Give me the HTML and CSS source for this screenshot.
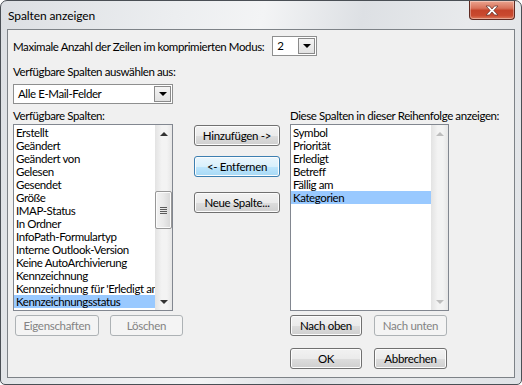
FILE: index.html
```html
<!DOCTYPE html>
<html lang="de">
<head>
    <meta charset="UTF-8">
    <title>Spalten anzeigen</title>
    <link rel="stylesheet" href="styles.css">
</head>
<body>
    <div class="window">
        <div class="titlebar">
            <span class="title">Spalten anzeigen</span>
            <div class="close-btn">
                <svg width="16" height="11" viewBox="0 0 16 11">
                    <path d="M2 1h3.5L8 4l2.5-3H14l-4.2 4.5L14 10h-3.5L8 7l-2.5 3H2l4.2-4.5z" fill="#fff" stroke="#6a3a32" stroke-width="0.8"/>
                </svg>
            </div>
        </div>

        <div class="client">
            <div class="row-max">
                <span>Maximale Anzahl der Zeilen im komprimierten Modus:</span>
                <div class="combo combo-small">
                    <span class="combo-text">2</span>
                    <span class="combo-btn"><i class="tri-down"></i></span>
                </div>
            </div>

            <div class="label-from">Verfügbare Spalten auswählen aus:</div>
            <div class="combo combo-wide">
                <span class="combo-text">Alle E-Mail-Felder</span>
                <span class="combo-btn"><i class="tri-down"></i></span>
            </div>

            <div class="columns">
                <div class="col-label">Verfügbare Spalten:</div>
                <div></div>
                <div class="col-label">Diese Spalten in dieser Reihenfolge anzeigen:</div>

                <div class="listbox list-left">
                    <ul class="items">
                        <li>Erstellt</li>
                        <li>Geändert</li>
                        <li>Geändert von</li>
                        <li>Gelesen</li>
                        <li>Gesendet</li>
                        <li>Größe</li>
                        <li>IMAP-Status</li>
                        <li>In Ordner</li>
                        <li>InfoPath-Formulartyp</li>
                        <li>Interne Outlook-Version</li>
                        <li>Keine AutoArchivierung</li>
                        <li>Kennzeichnung</li>
                        <li>Kennzeichnung für 'Erledigt am'</li>
                        <li class="selected">Kennzeichnungsstatus</li>
                    </ul>
                    <div class="scrollbar">
                        <span class="sb-arrow"><i class="tri-up"></i></span>
                        <span class="sb-space"></span>
                        <span class="sb-thumb"><i class="grip"></i></span>
                        <span class="sb-track"></span>
                        <span class="sb-arrow"><i class="tri-down small"></i></span>
                    </div>
                </div>

                <div class="mid-buttons">
                    <button class="btn btn-add">Hinzufügen -&gt;</button>
                    <button class="btn btn-focus">&lt;- Entfernen</button>
                    <button class="btn btn-new">Neue Spalte...</button>
                </div>

                <div class="listbox list-right">
                    <ul class="items">
                        <li>Symbol</li>
                        <li>Priorität</li>
                        <li>Erledigt</li>
                        <li>Betreff</li>
                        <li>Fällig am</li>
                        <li class="selected">Kategorien</li>
                    </ul>
                    <div class="scrollbar disabled">
                        <span class="sb-arrow"><i class="tri-up"></i></span>
                        <span class="sb-track"></span>
                        <span class="sb-arrow"><i class="tri-down small"></i></span>
                    </div>
                </div>

                <div class="btn-row left-row">
                    <button class="btn w84" disabled>Eigenschaften</button>
                    <button class="btn w73" disabled>Löschen</button>
                </div>
                <div></div>
                <div class="btn-row">
                    <button class="btn w72">Nach oben</button>
                    <button class="btn w73" disabled>Nach unten</button>
                </div>

                <div></div>
                <div></div>
                <div class="btn-row ok-row">
                    <button class="btn w72">OK</button>
                    <button class="btn w73">Abbrechen</button>
                </div>
            </div>
        </div>
    </div>
</body>
</html>
```

FILE: styles.css
```css
* {
    box-sizing: border-box;
}

body {
    margin: 0;
    background: #fff;
    font-family: Lato, "Noto Sans", sans-serif;
    font-size: 11.5px;
    letter-spacing: -0.4px;
    color: #000;
}

.window {
    width: 522px;
    height: 385px;
    border: 1px solid #4a4f55;
    border-radius: 7px 7px 5px 5px;
    background: linear-gradient(100deg, #dcdfe3 0%, #eceef0 30%, #f3f4f5 45%, #dde0e4 62%, #e8eaec 80%, #dfe2e6 100%);
    overflow: hidden;
}

.titlebar {
    height: 28px;
    display: flex;
    justify-content: space-between;
    align-items: flex-start;
}

.title {
    padding: 7px 0 0 7px;
    font-size: 12px;
    letter-spacing: -0.1px;
    color: #000;
}

.close-btn {
    width: 46px;
    height: 19px;
    margin-right: 6px;
    border: 1px solid #5e2a22;
    border-top: none;
    border-radius: 0 0 4px 4px;
    background: linear-gradient(#eba48f 0%, #d8725a 40%, #c4432a 52%, #c9492f 80%, #dd7a5c 100%);
    display: flex;
    justify-content: center;
    align-items: center;
    box-shadow: inset 0 0 0 1px rgba(255, 255, 255, 0.35);
}

.client {
    margin: 0 6px;
    height: 349px;
    border: 1px solid #7d8287;
    background: #f0f0f0;
    padding: 6px 0 0 5px;
}

.row-max {
    height: 20px;
    display: flex;
    align-items: center;
}

.combo {
    height: 20px;
    border: 1px solid #8e8f8f;
    background: #fff;
    display: flex;
    align-items: center;
    justify-content: space-between;
    padding: 1px;
}

.combo-small {
    width: 45px;
    margin-left: 8px;
}

.combo-wide {
    width: 160px;
    margin-top: 5px;
}

.combo-text {
    padding-left: 3px;
    line-height: 16px;
}

.combo-btn {
    width: 17px;
    height: 16px;
    border: 1px solid #8a8a8a;
    background: linear-gradient(#f4f4f4, #e2e2e2);
    display: flex;
    justify-content: center;
    align-items: center;
}

.tri-down {
    width: 0;
    height: 0;
    border-left: 4px solid transparent;
    border-right: 4px solid transparent;
    border-top: 4px solid #000;
}

.tri-up {
    width: 0;
    height: 0;
    border-left: 4px solid transparent;
    border-right: 4px solid transparent;
    border-bottom: 4px solid #333;
}

.tri-down.small {
    border-top-color: #333;
}

.label-from {
    margin-top: 8px;
    line-height: 15px;
}

.columns {
    display: grid;
    grid-template-columns: 181px 96px 159px;
}

.col-label {
    margin-top: 5px;
    line-height: 14px;
    margin-bottom: 1px;
    white-space: nowrap;
}

.listbox {
    height: 187px;
    border: 1px solid #828790;
    background: #fff;
    display: flex;
}

.list-left {
    width: 160px;
}

.list-right {
    width: 159px;
}

.items {
    list-style: none;
    margin: 0;
    padding: 1px 0 0 0;
    flex: 1;
    min-width: 0;
    overflow: hidden;
}

.items li {
    height: 13px;
    line-height: 13px;
    padding-left: 2px;
    white-space: nowrap;
    overflow: hidden;
}

.items li.selected {
    background: #99c9ff;
}

.scrollbar {
    width: 17px;
    display: flex;
    flex-direction: column;
    background: linear-gradient(to right, #e3e3e3, #f3f3f3 40%, #f3f3f3 70%, #e6e6e6);
}

.sb-arrow {
    height: 17px;
    display: flex;
    justify-content: center;
    align-items: center;
}

.sb-space {
    height: 49px;
}

.sb-thumb {
    height: 38px;
    border: 1px solid #979797;
    border-radius: 2px;
    background: linear-gradient(to right, #f3f3f3, #e9e9e9 50%, #d6d6d6);
    display: flex;
    justify-content: center;
    align-items: center;
    box-shadow: inset 0 0 0 1px #fbfbfb;
}

.grip {
    width: 7px;
    height: 7px;
    background: repeating-linear-gradient(#5a5a5a 0 1px, transparent 1px 2px);
}

.sb-track {
    flex: 1;
}

.scrollbar.disabled .tri-up {
    border-bottom-color: #bdbdbd;
}

.scrollbar.disabled .tri-down {
    border-top-color: #bdbdbd;
}

.mid-buttons {
    display: flex;
    flex-direction: column;
}

.btn {
    height: 21px;
    padding: 0;
    font-family: Lato, "Noto Sans", sans-serif;
    font-size: 11.5px;
    letter-spacing: -0.3px;
    color: #000;
    border: 1px solid #707070;
    border-radius: 3px;
    background: linear-gradient(#f2f2f2 0%, #ebebeb 50%, #dddddd 51%, #cfcfcf 100%);
    box-shadow: inset 0 0 0 1px #fcfcfc;
}

.btn:disabled {
    color: #838383;
    border-color: #adb2b5;
    background: #f4f4f4;
    box-shadow: none;
}

.btn-add {
    width: 86px;
    margin-top: 1px;
}

.btn-focus {
    width: 86px;
    margin-top: 10px;
    border-color: #3c7fb1;
    background: linear-gradient(#eaf6fd 0%, #d9f0fc 50%, #bee6fd 51%, #a7d9f5 100%);
}

.btn-new {
    width: 86px;
    margin-top: 15px;
}

.btn-row {
    display: flex;
    margin-top: 4px;
}

.left-row {
    gap: 11px;
    padding-left: 2px;
}

.btn-row .btn + .btn {
    margin-left: 12px;
}

.left-row .btn + .btn {
    margin-left: 0;
}

.ok-row {
    margin-top: 12px;
}

.w84 {
    width: 84px;
}

.w73 {
    width: 73px;
}

.w72 {
    width: 72px;
}
```
